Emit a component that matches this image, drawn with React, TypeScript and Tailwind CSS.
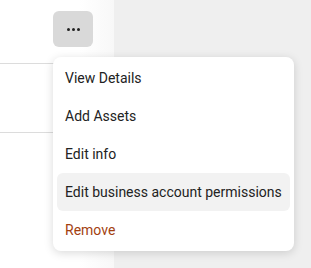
import React from "react";

const items = [
  { label: "View Details" },
  { label: "Add Assets" },
  { label: "Edit info" },
  { label: "Edit business account permissions", active: true },
  { label: "Remove", danger: true },
];

const App = () => {
  return (
    <div
      className="relative flex h-[268px] w-[311px] overflow-hidden bg-[#efefef]"
      style={{ fontFamily: "Roboto, 'Liberation Sans', sans-serif" }}
    >
      <div className="flex w-[114px] flex-col bg-gradient-to-r from-white from-70% to-[#f8f8f8]">
        <div className="flex h-[63px] items-start justify-end pr-[21px] pt-[11px]">
          <button className="flex h-[36px] w-[40px] items-center justify-center rounded-md bg-[#d9d9d9]">
            <span className="flex gap-[2px]">
              <span className="h-[3px] w-[3px] rounded-full bg-[#222]" />
              <span className="h-[3px] w-[3px] rounded-full bg-[#222]" />
              <span className="h-[3px] w-[3px] rounded-full bg-[#222]" />
            </span>
          </button>
        </div>
        <div className="h-[69px] border-t border-[#dcdcdc]" />
        <div className="flex-1 border-t border-[#dcdcdc]" />
      </div>

      <div className="absolute left-[53px] top-[57px] w-[241px] rounded-lg bg-white px-[4px] py-[2px] shadow-[0_2px_10px_rgba(0,0,0,0.15)]">
        {items.map((item) => (
          <div
            key={item.label}
            className={`flex h-[38px] items-center rounded-md px-[8px] text-[14px] ${
              item.active ? "bg-[#f2f2f2]" : ""
            } ${item.danger ? "text-[#a33f10]" : "text-[#222]"}`}
          >
            {item.label}
          </div>
        ))}
      </div>
    </div>
  );
};

export default App;
